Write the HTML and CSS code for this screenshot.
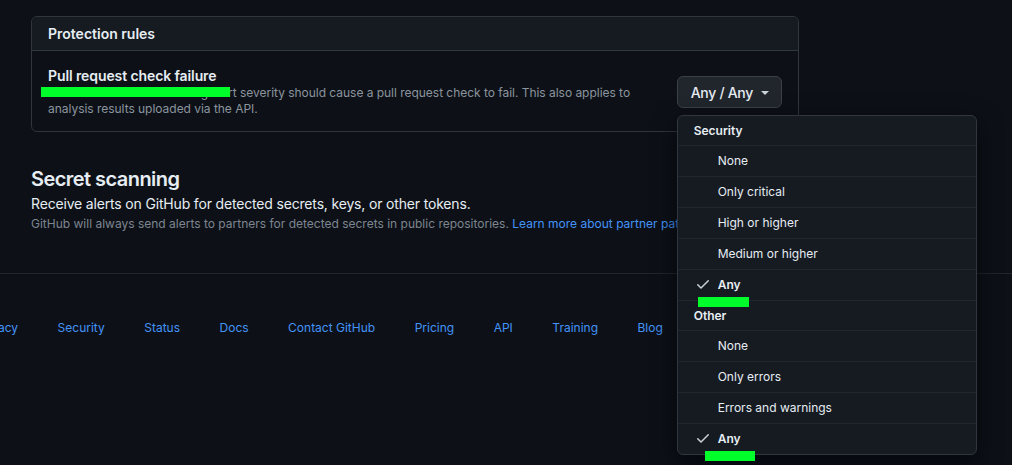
FILE: index.html
```html
<!DOCTYPE html>
<html lang="en">
<head>
<meta charset="utf-8">
<title>Code security settings</title>
<link rel="stylesheet" href="styles.css">
</head>
<body>
<div class="page">
  <main class="content">
    <section class="box">
      <div class="box-header">Protection rules</div>
      <div class="box-row">
        <div class="row-text">
          <div class="row-title">Pull request check failure</div>
          <p class="row-desc">Define which code scanning alert severity should cause a pull request check to fail. This also applies to analysis results uploaded via the API.</p>
        </div>
        <div class="menu-wrap">
          <button class="btn" type="button">Any / Any <span class="caret"></span></button>
          <div class="menu">
            <div class="menu-group">Security</div>
            <div class="menu-item">None</div>
            <div class="menu-item">Only critical</div>
            <div class="menu-item">High or higher</div>
            <div class="menu-item">Medium or higher</div>
            <div class="menu-item selected"><svg class="check" viewBox="0 0 16 16" width="16" height="16"><path d="M13.78 4.22a.75.75 0 0 1 0 1.06l-7.25 7.25a.75.75 0 0 1-1.06 0L2.22 9.28a.75.75 0 0 1 1.06-1.06L6 10.94l6.72-6.72a.75.75 0 0 1 1.06 0Z"/></svg>Any</div>
            <div class="menu-group">Other</div>
            <div class="menu-item">None</div>
            <div class="menu-item">Only errors</div>
            <div class="menu-item">Errors and warnings</div>
            <div class="menu-item selected"><svg class="check" viewBox="0 0 16 16" width="16" height="16"><path d="M13.78 4.22a.75.75 0 0 1 0 1.06l-7.25 7.25a.75.75 0 0 1-1.06 0L2.22 9.28a.75.75 0 0 1 1.06-1.06L6 10.94l6.72-6.72a.75.75 0 0 1 1.06 0Z"/></svg>Any</div>
          </div>
        </div>
      </div>
    </section>

    <section class="secret">
      <h2 class="secret-title">Secret scanning</h2>
      <p class="secret-sub">Receive alerts on GitHub for detected secrets, keys, or other tokens.</p>
      <p class="secret-note">GitHub will always send alerts to partners for detected secrets in public repositories. <a href="#" class="link">Learn more about partner patterns</a>.</p>
    </section>
  </main>

  <footer class="footer">
    <nav class="footer-links">
      <a href="#">Privacy</a>
      <a href="#">Security</a>
      <a href="#">Status</a>
      <a href="#">Docs</a>
      <a href="#">Contact GitHub</a>
      <a href="#">Pricing</a>
      <a href="#">API</a>
      <a href="#">Training</a>
      <a href="#">Blog</a>
      <a href="#">About</a>
    </nav>
  </footer>

  <span class="redact redact-1"></span>
  <span class="redact redact-2"></span>
  <span class="redact redact-3"></span>
</div>
</body>
</html>
```

FILE: styles.css
```css
html, body {
  margin: 0;
  padding: 0;
  background: #0d1117;
}

body {
  font-family: Inter, "Liberation Sans", Arial, sans-serif;
  color: #e6edf3;
  overflow: hidden;
  height: 465px;
}

.page {
  position: relative;
  width: 1012px;
  height: 465px;
  overflow: hidden;
}

.content {
  padding: 16px 0 0 31px;
  width: 768px;
}

.box {
  border: 1px solid #30363d;
  border-radius: 6px;
}

.box-header {
  background: #161b22;
  border-bottom: 1px solid #30363d;
  border-radius: 6px 6px 0 0;
  padding: 8px 16px;
  line-height: 17px;
  font-size: 14px;
  font-weight: 600;
}

.box-row {
  display: flex;
  align-items: center;
  gap: 16px;
  padding: 16px 16px 14px;
}

.row-text {
  flex: 1;
  min-width: 0;
}

.row-title {
  font-size: 14px;
  font-weight: 600;
  line-height: 18px;
  letter-spacing: -0.1px;
}

.row-desc {
  margin: 0;
  font-size: 12px;
  line-height: 16px;
  color: #8b949e;
  letter-spacing: -0.03px;
}

.menu-wrap {
  position: relative;
  flex: none;
}

.btn {
  display: flex;
  align-items: center;
  gap: 8px;
  height: 32px;
  padding: 0 12px 0 13px;
  background: #21262d;
  border: 1px solid #3b4048;
  border-radius: 6px;
  color: #e6edf3;
  font-family: inherit;
  font-size: 14px;
  font-weight: 500;
  letter-spacing: -0.3px;
  cursor: pointer;
}

.caret {
  width: 0;
  height: 0;
  border-left: 4px solid transparent;
  border-right: 4px solid transparent;
  border-top: 4px solid #c9d1d9;
  margin-top: 1px;
}

.menu {
  position: absolute;
  top: 39px;
  left: 0;
  width: 298px;
  background: #161b22;
  border: 1px solid #30363d;
  border-radius: 6px;
  box-shadow: 0 8px 24px rgba(1, 4, 9, 0.75);
  overflow: hidden;
  z-index: 5;
}

.menu-group {
  height: 29px;
  display: flex;
  align-items: center;
  padding-left: 16px;
  font-size: 12px;
  font-weight: 600;
  border-top: 1px solid #21262d;
}

.menu-group:first-child {
  border-top: 0;
}

.menu-item {
  height: 28px;
  padding-bottom: 2px;
  display: flex;
  align-items: center;
  padding-left: 40px;
  font-size: 12px;
  border-top: 1px solid #21262d;
  position: relative;
}

.menu-item.selected {
  font-weight: 600;
}

.check {
  position: absolute;
  left: 17px;
  top: 6px;
  fill: #c9d1d9;
}

.secret {
  margin-top: 35px;
}

.secret-title {
  margin: 0;
  font-size: 20px;
  font-weight: 600;
  line-height: 24px;
  letter-spacing: -0.55px;
}

.secret-sub {
  margin: 3px 0 0;
  font-size: 14px;
  line-height: 20px;
  letter-spacing: -0.17px;
}

.secret-note {
  margin: 1px 0 0;
  font-size: 12px;
  line-height: 18px;
  color: #7d8590;
  white-space: nowrap;
}

.link {
  color: #4493f8;
  text-decoration: none;
}

.footer {
  margin-top: 40px;
  border-top: 1px solid #21262d;
  padding-top: 45px;
}

.footer-links {
  display: flex;
  gap: 39.5px;
  margin-left: -24px;
  white-space: nowrap;
}

.footer-links a {
  font-size: 12px;
  line-height: 18px;
  color: #4493f8;
  text-decoration: none;
}

.redact {
  position: absolute;
  background: #00ff2a;
  z-index: 10;
}

.redact-1 { left: 41px; top: 87px; width: 189px; height: 10px; }
.redact-2 { left: 698px; top: 297px; width: 51px; height: 10px; }
.redact-3 { left: 705px; top: 451px; width: 50px; height: 10px; }
```
